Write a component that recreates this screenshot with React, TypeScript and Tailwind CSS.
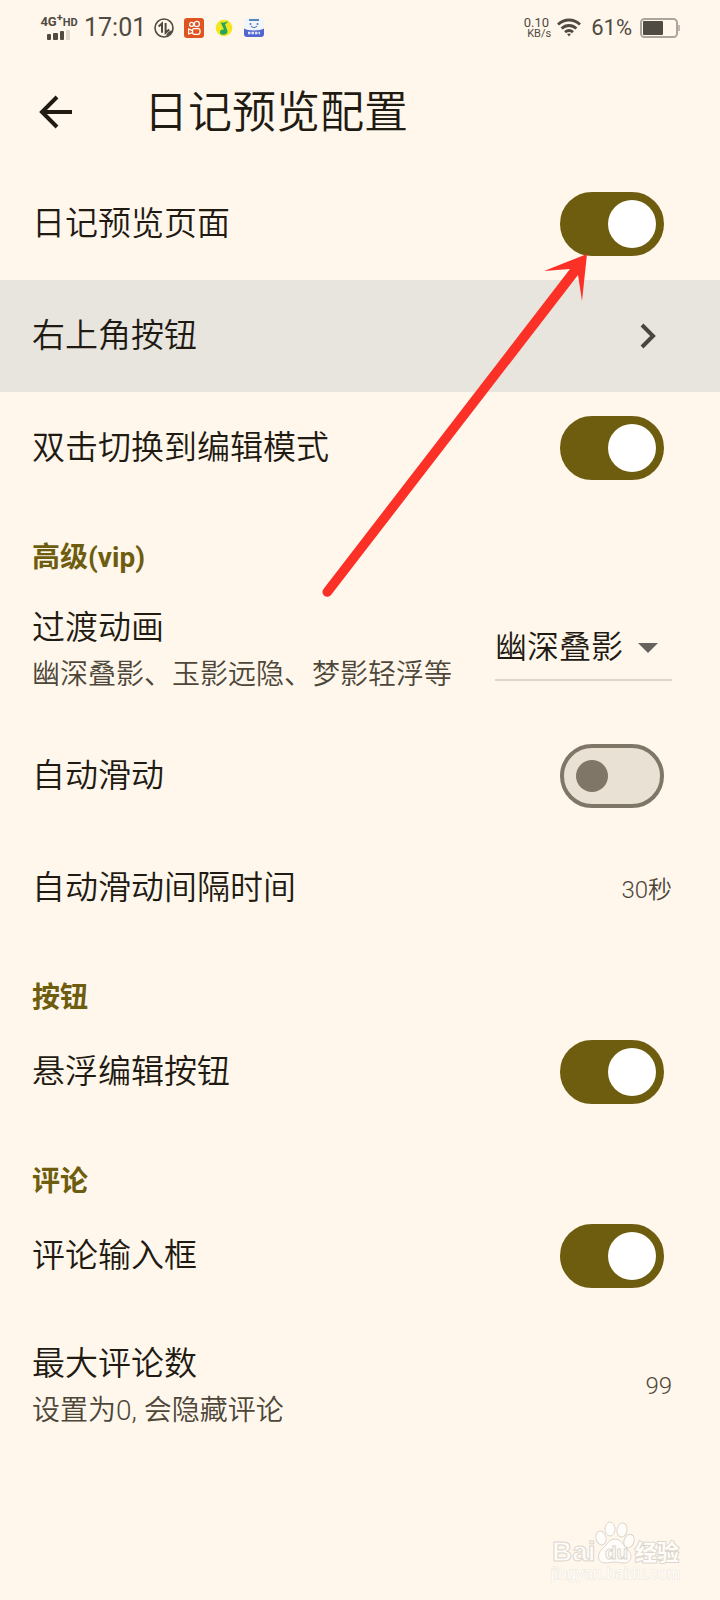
import { useState } from 'react';
import type { ReactNode } from 'react';

interface SwitchRowProps {
  id: string;
  label: string;
  initial: boolean;
}

interface ValueRowProps {
  label: string;
  hint?: string;
  children: ReactNode;
}

const transitions = ['幽深叠影', '玉影远隐', '梦影轻浮'];

function StatusBar() {
  return (
    <div className="flex h-14 items-center justify-between px-10 font-normal text-[#4f4a42]">
      <div className="flex items-center">
        <div className="flex w-[38px] flex-col items-center gap-px">
          <span className="text-[13px] leading-[12px] font-bold whitespace-nowrap">
            4G<sup className="text-[11px]">+</sup>
            <span className="text-[11px]">HD</span>
          </span>
          <svg viewBox="0 0 24 10" className="h-[10px] w-6" aria-hidden="true">
            <rect x="0" y="4" width="4" height="6" rx="1" fill="#4f4a42" />
            <rect x="6" y="3" width="5" height="7" rx="1" fill="#4f4a42" />
            <rect x="13" y="1" width="4" height="9" rx="1" fill="#4f4a42" />
            <rect x="19" y="0" width="4" height="10" rx="1" fill="#dcd6cb" />
          </svg>
        </div>
        <span className="ml-1.5 text-[25px] leading-8">17:01</span>
        <div className="ml-2 flex items-center gap-2.5">
          <svg viewBox="0 0 20 20" className="size-5" fill="none" stroke="#4f4a42" aria-hidden="true">
            <circle cx="10" cy="10" r="9" strokeWidth="1.6" />
            <path d="M4.6 8.4 8 5.400v9.400M11.600 5v9.800l3.600-3.400" strokeWidth="2" />
            <path d="M12.500 17.600c.4-2.600 2.600-4.600 5.700-4.800-.8 2.200-3 4.200-5.700 4.800Z" fill="#4f4a42" strokeWidth=".5" />
          </svg>
          <svg viewBox="0 0 20 20" className="size-5" fill="none" stroke="#fff" aria-hidden="true">
            <rect width="20" height="20" rx="3" fill="#df5420" stroke="none" />
            <circle cx="7.600" cy="6.400" r="2" strokeWidth="1.200" />
            <circle cx="12.800" cy="6" r="2.600" strokeWidth="1.200" />
            <rect x="8.500" y="10.600" width="7.500" height="5.800" rx="1.800" strokeWidth="1.300" />
            <path d="M8.500 12.600 4.600 11v5l3.900-1.400" strokeWidth="1.200" />
          </svg>
          <svg viewBox="0 0 20 20" className="size-5" aria-hidden="true">
            <circle cx="10" cy="10" r="8.300" fill="#f3e51f" />
            <path d="M6.500 4.200c2 1 4.500.4 7.500-1.200-.6 1.800-1.800 2.800-3 3.200l2.400 6.600c1 4.200-6.600 5.600-7.400 2-.5-2.400 1.700-3.600 4-3.200L6.500 4.200Z" fill="#22a65c" />
          </svg>
          <svg viewBox="0 0 20 20" className="size-5" aria-hidden="true">
            <rect width="20" height="19" rx="3" fill="#f1f5fa" />
            <path d="M5 1h10v2H5z" fill="#5587b8" />
            <path d="M0 10.500c3 2.600 17 2.600 20 0V16a3 3 0 0 1-3 3H3a3 3 0 0 1-3-3Z" fill="#5366cf" />
            <path d="M7 8c1.500 2 4.500 2 6 0" fill="none" stroke="#4d7cb5" strokeWidth="1.200" />
            <circle cx="6.500" cy="6" r="1" fill="#4d7cb5" />
            <circle cx="13.500" cy="6" r="1" fill="#4d7cb5" />
            <path d="M4 15h12" stroke="#dfe6ff" strokeWidth="2.500" strokeDasharray="2.500 1" />
          </svg>
        </div>
      </div>

      <div className="flex items-center">
        <div className="flex flex-col items-end text-[13px] leading-[11px]">
          <span className="pr-0.5">0.10</span>
          <span className="text-[11px]">KB/s</span>
        </div>
        <svg viewBox="0 0 24 20" className="ml-1.5 h-5 w-6" fill="none" stroke="#4f4a42" strokeWidth="2.800" aria-hidden="true">
          <path d="M1 6.500C7.500.500 16.500.500 23 6.500M4.600 10.500c4.400-4 10.400-4 14.800 0M8 14.200c2.400-2 5.600-2 8 0" />
          <path d="m12 18.500-2-2.400c1.200-.8 2.800-.8 4 0Z" fill="#4f4a42" stroke="none" />
        </svg>
        <span className="ml-2.5 text-[22px] leading-8">61%</span>
        <svg viewBox="0 0 40 20" className="ml-2 h-5 w-10" aria-hidden="true">
          <rect x="1" y="1" width="36" height="18" rx="3.500" fill="none" stroke="#aaa69f" strokeWidth="2" />
          <rect x="3" y="3" width="20" height="14" rx="1" fill="#4f4a42" />
          <path d="M39 7v6" stroke="#aaa69f" strokeWidth="1.500" />
        </svg>
      </div>
    </div>
  );
}

function SwitchRow({ id, label, initial }: SwitchRowProps) {
  const [checked, setChecked] = useState(initial);

  return (
    <div className="flex h-28 items-center justify-between pr-14 pl-8">
      <label htmlFor={id} className="text-[33px] leading-[48px]">{label}</label>
      <span className="relative flex h-16 w-[104px] shrink-0">
        <input
          id={id}
          type="checkbox"
          role="switch"
          checked={checked}
          onChange={(e) => setChecked(e.target.checked)}
          className="peer h-16 w-[104px] cursor-pointer appearance-none rounded-full border-4 border-[#7f7667] bg-[#e9e2d4] checked:border-[#6e5d0e] checked:bg-[#6e5d0e]"
        />
        <span className="pointer-events-none absolute top-4 left-4 size-8 rounded-full bg-[#7f7667] peer-checked:top-2 peer-checked:left-12 peer-checked:size-12 peer-checked:bg-white" />
      </span>
    </div>
  );
}

function ValueRow({ label, hint, children }: ValueRowProps) {
  return (
    <div className={hint ? 'flex h-36 items-center justify-between pr-12 pl-8' : 'flex h-28 items-center justify-between pr-12 pl-8'}>
      <div className={hint ? 'pt-1.5' : ''}>
        <p className="text-[33px] leading-[48px]">{label}</p>
        {hint && <p className="text-[28px] leading-[46px] text-[#4d4639]">{hint}</p>}
      </div>
      {children}
    </div>
  );
}

function SectionTitle({ children }: { children: ReactNode }) {
  return <h2 className="h-[72px] pt-8 pl-8 text-[28px] leading-[44px] font-bold text-[#6e5d0e]">{children}</h2>;
}

function Watermark() {
  return (
    <div className="mt-auto mr-10 mb-[18px] flex flex-col items-end font-['Liberation_Sans','Noto_Sans_CJK_SC',sans-serif] text-[#fffdf9]">
      <svg viewBox="0 0 128 46" className="h-[46px] w-32" fill="#fffdf9" stroke="#dcd6cd" strokeWidth="1" aria-label="Baidu 经验">
        <text x="0" y="41" fontSize="28" fontWeight="700">Bai</text>
        <ellipse cx="49" cy="18" rx="5" ry="7" transform="rotate(-14 49 18)" />
        <ellipse cx="58" cy="9" rx="5" ry="7" />
        <ellipse cx="70" cy="10" rx="5" ry="7" transform="rotate(10 70 10)" />
        <ellipse cx="77" cy="21" rx="5" ry="7" transform="rotate(20 77 21)" />
        <path d="M63 19c6 0 8 6 12 10 7 6 4 14-3 14-4 0-6-1-9-1s-6 1-10 1c-7 0-9-8-3-14 5-4 7-10 13-10Z" />
        <text x="53" y="39" fontSize="19" fontWeight="700">du</text>
        <text x="83" y="40" fontSize="22" fontWeight="700" strokeWidth="2" className="[paint-order:stroke]">经验</text>
      </svg>
      <p className="text-[16px] leading-4 [-webkit-text-stroke:1px_#ece6dc] [paint-order:stroke_fill]">jingyan.baidu.com</p>
    </div>
  );
}

export default function App() {
  const [transition, setTransition] = useState(transitions[0]);

  return (
    <div className="relative flex min-h-screen flex-col bg-[#fff7ec] font-[Roboto,'Noto_Sans_CJK_SC',sans-serif] font-[350] text-[#1f1b13]">
      <StatusBar />

      <header className="flex h-28 items-center pl-8">
        <button type="button" aria-label="返回" className="flex size-12 items-center justify-center">
          <svg viewBox="0 0 48 48" className="size-12" fill="none" stroke="#1f1b13" strokeWidth="4" aria-hidden="true">
            <path d="M40 24H11M25 9 10 24l15 15" />
          </svg>
        </button>
        <h1 className="ml-16 pt-0.5 text-[44px] leading-[64px] font-[350]">日记预览配置</h1>
      </header>

      <main>
        <SwitchRow id="preview-page" label="日记预览页面" initial />
        <button type="button" className="flex h-28 w-full items-center justify-between bg-[#e8e5de] pr-14 pl-8 text-left">
          <span className="text-[33px] leading-[48px]">右上角按钮</span>
          <svg viewBox="0 0 32 32" className="size-8" fill="none" stroke="#4a463e" strokeWidth="4" aria-hidden="true">
            <path d="m10 5 11 11-11 11" />
          </svg>
        </button>
        <SwitchRow id="double-tap" label="双击切换到编辑模式" initial />

        <SectionTitle>高级(vip)</SectionTitle>
        <ValueRow label="过渡动画" hint="幽深叠影、玉影远隐、梦影轻浮等">
          <div className="relative">
            <select
              aria-label="过渡动画"
              value={transition}
              onChange={(e) => setTransition(e.target.value)}
              className="h-[66px] w-[177px] appearance-none border-b-2 border-[#ddd6cb] bg-transparent text-[32px] leading-[48px]"
            >
              {transitions.map((name) => (
                <option key={name} value={name}>{name}</option>
              ))}
            </select>
            <svg viewBox="0 0 20 10" className="pointer-events-none absolute top-7 right-3.5 h-[10px] w-5" aria-hidden="true">
              <path d="M0 0h20L10 10Z" fill="#66635e" />
            </svg>
          </div>
        </ValueRow>
        <SwitchRow id="auto-slide" label="自动滑动" initial={false} />
        <ValueRow label="自动滑动间隔时间">
          <span className="pt-1 text-[24px] leading-8 text-[#4d4639]">30秒</span>
        </ValueRow>

        <SectionTitle>按钮</SectionTitle>
        <SwitchRow id="float-edit" label="悬浮编辑按钮" initial />

        <SectionTitle>评论</SectionTitle>
        <SwitchRow id="comment-input" label="评论输入框" initial />
        <ValueRow label="最大评论数" hint="设置为0, 会隐藏评论">
          <span className="pt-1 text-[24px] leading-8 text-[#4d4639]">99</span>
        </ValueRow>
      </main>

      <Watermark />

      {/* pointer to the first switch */}
      <svg viewBox="0 0 270 350" className="pointer-events-none absolute top-[250px] right-[130px] h-[350px] w-[270px]" aria-hidden="true">
        <path d="m267 4-43 17 26-2L3.500 339a4.500 4.500 0 0 0 7.500 6L258 25l4 26Z" fill="#fb3128" />
      </svg>
    </div>
  );
}
